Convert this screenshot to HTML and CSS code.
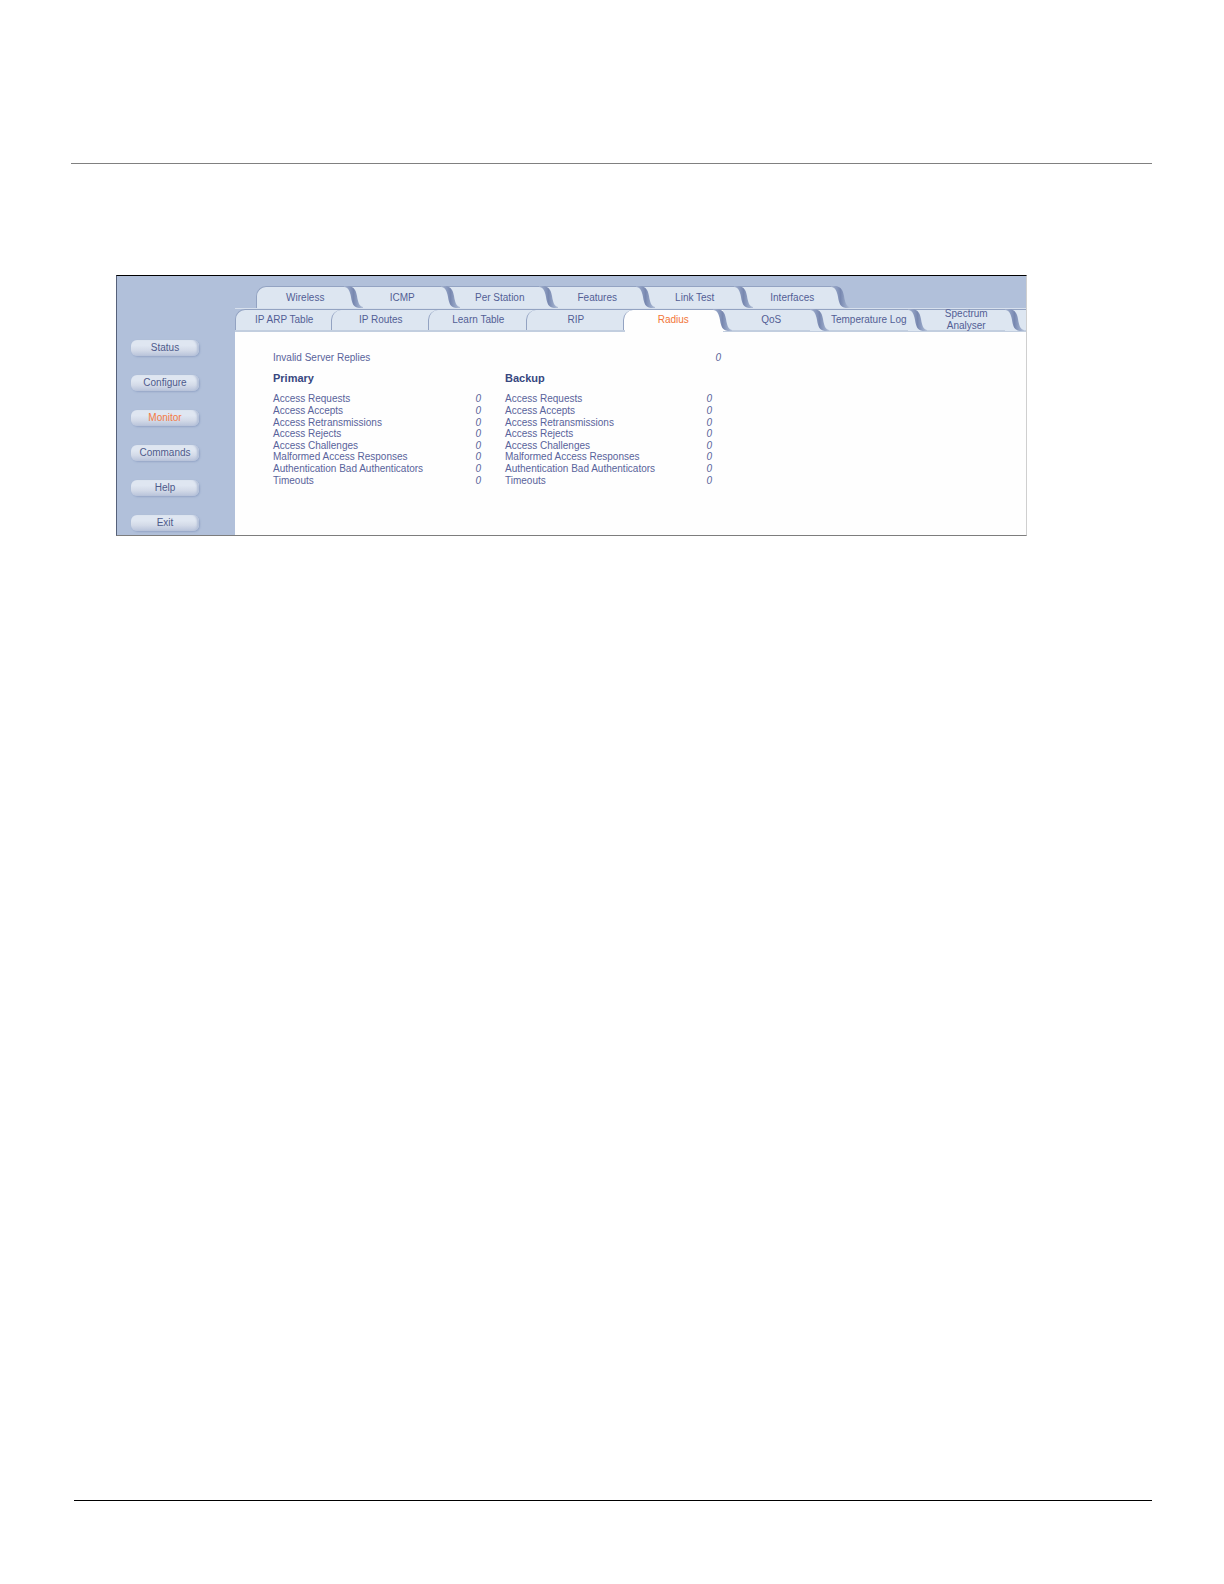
FILE: index.html
```html
<!DOCTYPE html>
<html lang="en">
<head>
<meta charset="utf-8">
<title>Monitor - Radius</title>
<link rel="stylesheet" href="styles.css">
</head>
<body>
<svg class="defs" aria-hidden="true">
  <defs>
    <linearGradient id="fold" x1="0" y1="0" x2="1" y2="0">
      <stop offset="0" stop-color="#a3b1cd"/>
      <stop offset="0.3" stop-color="#8b9bbf"/>
      <stop offset="0.5" stop-color="#7888b0"/>
      <stop offset="0.75" stop-color="#94a4c5"/>
      <stop offset="1" stop-color="#b4c1d8"/>
    </linearGradient>
    <symbol id="curl" viewBox="0 0 20 22">
      <path class="curl-face" d="M0 1H2C6 2 7 6 8 11C9 17 11 21 17 22H0Z"/>
      <path fill="url(#fold)" d="M0 0H5C10 1 12 4 13 10C14 16 15 20 19 21V22H15C9 21 8 17 7 11C6 5 4 1 0 1Z"/>
    </symbol>
  </defs>
</svg>
<div class="page">
  <hr class="rule rule-top">
  <main class="panel">
    <nav class="sidebar" aria-label="Sections">
      <button type="button">Status</button>
      <button type="button">Configure</button>
      <button type="button" class="current">Monitor</button>
      <button type="button">Commands</button>
      <button type="button">Help</button>
      <button type="button">Exit</button>
    </nav>
    <div class="content">
      <nav class="tabs" aria-label="Monitor pages">
        <ul class="tab-row back">
          <li><a href="#">Wireless</a><svg class="curl"><use href="#curl"/></svg></li>
          <li><a href="#">ICMP</a><svg class="curl"><use href="#curl"/></svg></li>
          <li><a href="#">Per Station</a><svg class="curl"><use href="#curl"/></svg></li>
          <li><a href="#">Features</a><svg class="curl"><use href="#curl"/></svg></li>
          <li><a href="#">Link Test</a><svg class="curl"><use href="#curl"/></svg></li>
          <li class="end"><a href="#">Interfaces</a><svg class="curl"><use href="#curl"/></svg></li>
        </ul>
        <ul class="tab-row front">
          <li><a class="round" href="#">IP ARP Table</a></li>
          <li><a class="round" href="#">IP Routes</a></li>
          <li><a class="round" href="#">Learn Table</a></li>
          <li><a class="round" href="#">RIP</a></li>
          <li class="active"><a class="round" href="#" aria-current="page">Radius</a><svg class="curl"><use href="#curl"/></svg></li>
          <li><a href="#">QoS</a><svg class="curl"><use href="#curl"/></svg></li>
          <li><a href="#">Temperature Log</a><svg class="curl"><use href="#curl"/></svg></li>
          <li><a href="#">Spectrum<br>Analyser</a><svg class="curl"><use href="#curl"/></svg></li>
        </ul>
      </nav>
      <section class="stats">
        <dl class="invalid">
          <dt>Invalid Server Replies</dt>
          <dd>0</dd>
        </dl>
        <div class="servers">
          <section>
            <h2>Primary</h2>
            <table>
              <tr><th scope="row">Access Requests</th><td>0</td></tr>
              <tr><th scope="row">Access Accepts</th><td>0</td></tr>
              <tr><th scope="row">Access Retransmissions</th><td>0</td></tr>
              <tr><th scope="row">Access Rejects</th><td>0</td></tr>
              <tr><th scope="row">Access Challenges</th><td>0</td></tr>
              <tr><th scope="row">Malformed Access Responses</th><td>0</td></tr>
              <tr><th scope="row">Authentication Bad Authenticators</th><td>0</td></tr>
              <tr><th scope="row">Timeouts</th><td>0</td></tr>
            </table>
          </section>
          <section>
            <h2>Backup</h2>
            <table>
              <tr><th scope="row">Access Requests</th><td>0</td></tr>
              <tr><th scope="row">Access Accepts</th><td>0</td></tr>
              <tr><th scope="row">Access Retransmissions</th><td>0</td></tr>
              <tr><th scope="row">Access Rejects</th><td>0</td></tr>
              <tr><th scope="row">Access Challenges</th><td>0</td></tr>
              <tr><th scope="row">Malformed Access Responses</th><td>0</td></tr>
              <tr><th scope="row">Authentication Bad Authenticators</th><td>0</td></tr>
              <tr><th scope="row">Timeouts</th><td>0</td></tr>
            </table>
          </section>
        </div>
      </section>
    </div>
  </main>
  <hr class="rule rule-bottom">
</div>
</body>
</html>
```
FILE: styles.css
```css
* { box-sizing: border-box; }

body {
  margin: 0;
  background: #fff;
  color: #59639b;
  font: 10px/12px "Liberation Sans", Arial, sans-serif;
}

.defs { position: absolute; width: 0; height: 0; }

.page {
  display: flex;
  flex-direction: column;
  min-height: 100vh;
  padding: 163px 72px 83px 71px;
}

.rule { height: 1px; margin: 0; border: 0; }
.rule-top { background: #808080; }
.rule-bottom { margin-top: auto; margin-left: 3px; background: #000; }

/* Application panel */
.panel {
  display: flex;
  margin: 111px 125px 0 45px;
  border: 1px solid #cfcfcf;
  border-top-color: #000;
  border-bottom-color: #7d7d7d;
  border-left-color: #56617a;
  background: #fefefe;
  overflow: hidden;
}

.sidebar {
  display: flex;
  flex: none;
  flex-direction: column;
  gap: 19px;
  width: 118px;
  padding: 64px 14px 4px;
  background: #b1c0da;
}

.sidebar button {
  width: 68px;
  height: 16px;
  padding: 0;
  border: 0;
  border-radius: 6px;
  background: linear-gradient(#dfe6f1 35%, #d3dae8 65%, #b8c3da);
  box-shadow: inset -3px 0 2px -1px #b4c0d8, 1px 1px 2px #94a5c7;
  color: #4e5a8b;
  font: inherit;
  white-space: nowrap;
}
.sidebar .current { color: #f47a42; }

/* Tabs */
.content { flex: 1; min-width: 0; }

.tabs { padding-top: 10px; background: #b1c0da; }

.tab-row {
  display: grid;
  grid-template-columns: repeat(8, 1fr);
  margin: 0;
  padding: 0;
  list-style: none;
}
.back { margin: 0 -10px 0 21px; }
.front {
  padding-right: 11px;
  border-top: 1px solid #d7e0ed;
  background:
    linear-gradient(#93a3c2, #93a3c2) right top / 12px 1px no-repeat,
    linear-gradient(#c2cedf, #c2cedf) right bottom / 12px 2px no-repeat,
    linear-gradient(#dde6f1, #dde6f1) right / 12px 100% no-repeat;
  background-origin: padding-box;
}

.tab-row li {
  position: relative;
  height: 22px;
  border-top: 1px solid #93a3c2;
  background: #dde6f1;
}
.front li { height: 23px; border-bottom: 2px solid #c2cedf; }
.back li:first-child,
.front li:first-child { border-top: 0; background: none; }
.front .active { border-bottom-color: #fefefe; }
.back .end {
  border-image: linear-gradient(90deg, #93a3c2 calc(100% - 9px), transparent 0) 1;
  background: linear-gradient(90deg, #dde6f1 calc(100% - 9px), transparent 0);
}

.tab-row a {
  display: flex;
  align-items: center;
  justify-content: center;
  height: 100%;
  color: #535e95;
  text-align: center;
  text-decoration: none;
  white-space: nowrap;
}
.back li:first-child a,
.front .round {
  border-left: 1px solid #93a3c2;
  border-top-left-radius: 10px;
  background: #dde6f1;
}
.front li + li .round { margin-left: -2px; }
.back li:first-child a,
.front li:first-child a { border-top: 1px solid #93a3c2; }
.front .active a { background: #fefefe; color: #f27638; }

.curl {
  position: absolute;
  top: -1px;
  right: -10px;
  z-index: 1;
  width: 20px;
  height: 22px;
}
.back li:first-child .curl { top: 0; }
.active .curl { --face: #fefefe; }
.curl-face { fill: var(--face, #dde6f1); }

/* Statistics */
.stats { padding: 20px 38px 47px; }

.invalid {
  display: flex;
  justify-content: space-between;
  width: 448px;
  margin: 0;
}
.invalid dd { margin: 0; font-style: italic; }

.servers { display: grid; grid-template-columns: 208px 207px; gap: 24px; }

h2 {
  margin: 7px 0 8px;
  color: #37477f;
  font-size: 11px;
  line-height: 14px;
}

table { width: 100%; height: 93px; border-collapse: collapse; line-height: 11px; }
th, td { padding: 0; font-weight: normal; text-align: left; }
td { font-style: italic; text-align: right; }
```
